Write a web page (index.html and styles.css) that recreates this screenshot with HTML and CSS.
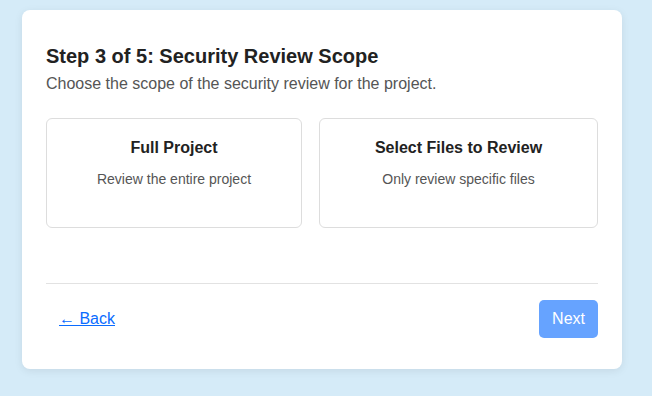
FILE: index.html
```html
<!doctype html>
<html>
    <head>
        <link rel="stylesheet" href="styles.css">
    </head>
    <body>
        <div class="wizard">
            <h2 class="title">Step 3 of 5: Security Review Scope</h2>
            <p class="subtitle">Choose the scope of the security review for the project.</p>
            <div class="options">
                <div class="option">
                    <h3>Full Project</h3>
                    <p>Review the entire project</p>
                </div>
                <div class="option">
                    <h3>Select Files to Review</h3>
                    <p>Only review specific files</p>
                </div>
            </div>
            <div class="footer">
                <button class="back">&larr; Back</button>
                <button class="next" disabled>Next</button>
            </div>
        </div>
    </body>
</html>
```

FILE: styles.css
```css
*{
    margin: 0;
    padding: 0;
    box-sizing: border-box;
}
body{
    background: #d5ebf8;
    font-family: "Liberation Sans", Arial, sans-serif;
    padding: 10px 30px 27px 22px;
}
.wizard{
    background: #fff;
    width: 600px;
    border-radius: 8px;
    padding: 34px 24px 31px;
    box-shadow: 0 2px 8px rgba(0,0,0,0.08);
}
.title{
    font-size: 20px;
    color: #222;
    line-height: 24px;
}
.subtitle{
    font-size: 16px;
    color: #555;
    margin-top: 6px;
    line-height: 20px;
}
.options{
    display: grid;
    grid-template-columns: 256fr 279fr;
    gap: 17px;
    margin-top: 24px;
}
.option{
    border: 1px solid #ddd;
    border-radius: 6px;
    min-height: 110px;
    padding: 20px 16px;
    text-align: center;
}
.option h3{
    font-size: 16px;
    color: #222;
    line-height: 18px;
}
.option p{
    font-size: 14px;
    color: #555;
    margin-top: 14px;
    line-height: 16px;
}
.footer{
    display: flex;
    justify-content: space-between;
    align-items: center;
    border-top: 1px solid #e2e2e2;
    margin-top: 55px;
    padding-top: 16px;
}
.back{
    background: none;
    border: none;
    color: #0a6cff;
    text-decoration: underline;
    font-family: inherit;
    font-size: 16px;
    padding: 8px 13px;
    cursor: pointer;
}
.next{
    background: #66a3ff;
    border: none;
    border-radius: 5px;
    color: #fff;
    font-family: inherit;
    font-size: 16px;
    line-height: 18px;
    padding: 10px 13px;
}
```
